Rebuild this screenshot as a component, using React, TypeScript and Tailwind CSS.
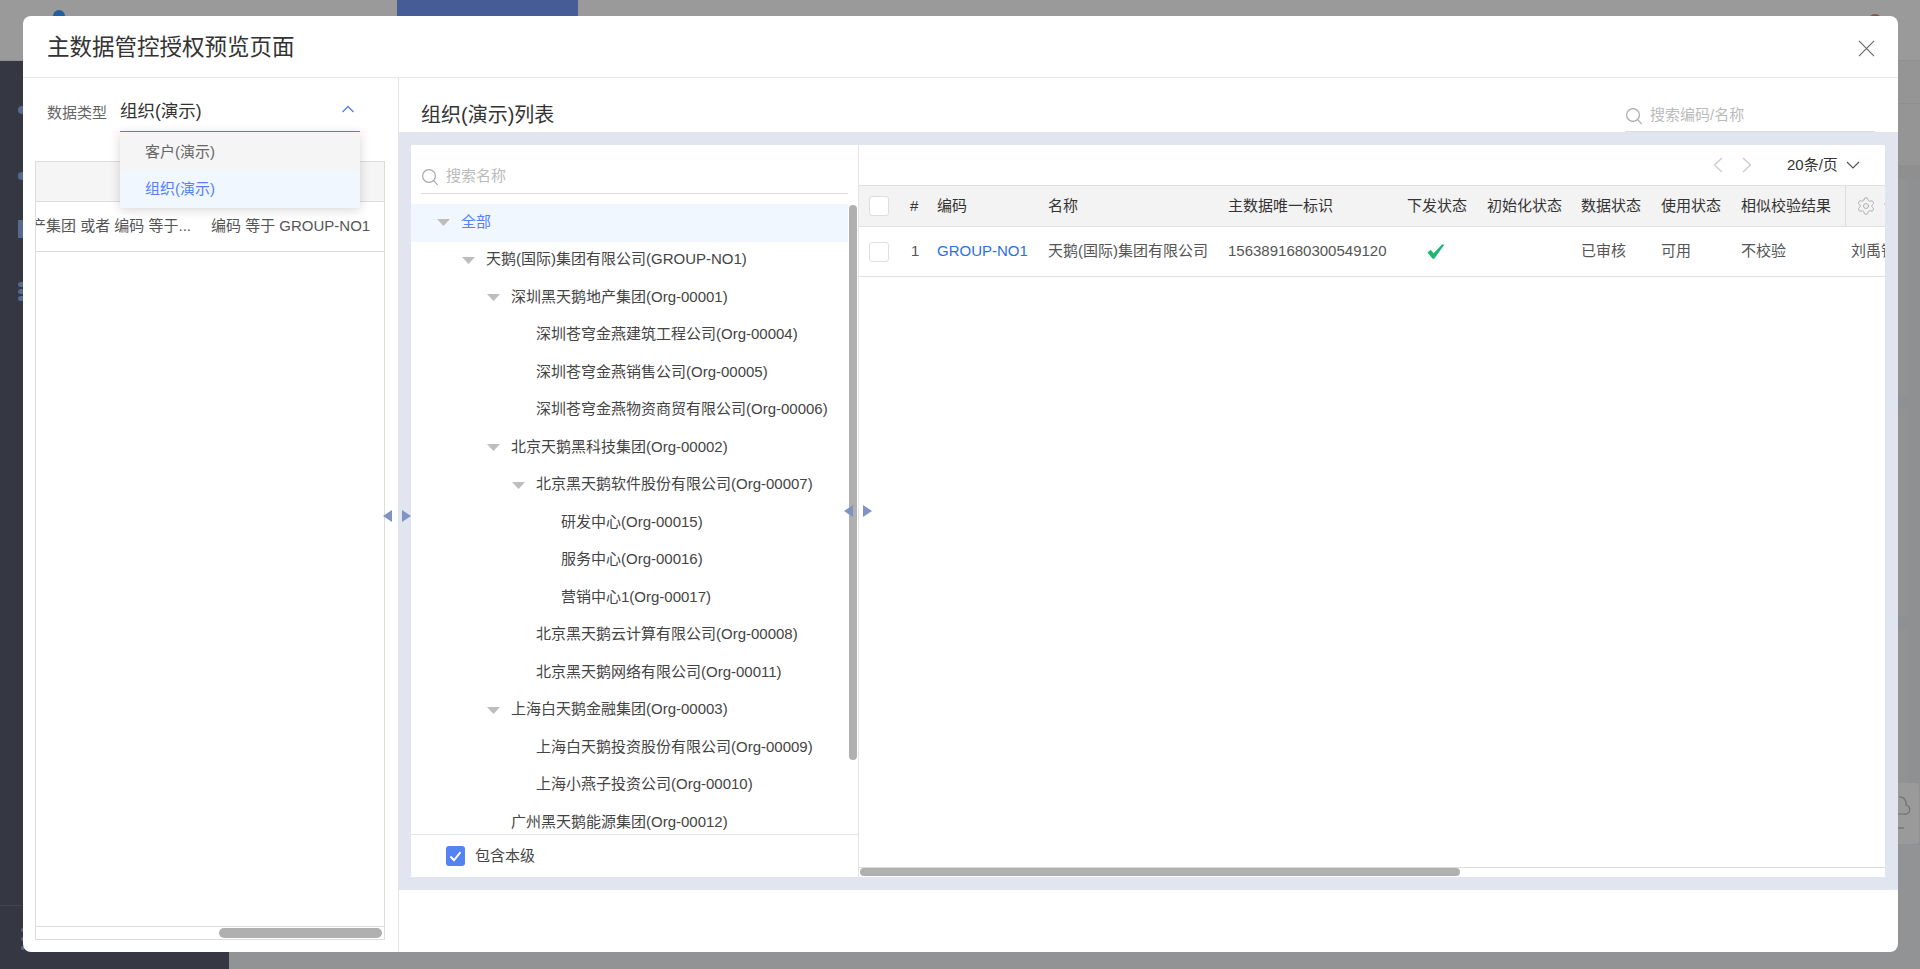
import React from "react";
import { Settings } from "lucide-react";

const font = "font-['Liberation_Sans','Noto_Sans_CJK_SC',sans-serif]";

const tree: { d: number; t: string; open?: boolean; active?: boolean }[] = [
  { d: 0, t: "全部", open: true, active: true },
  { d: 1, t: "天鹅(国际)集团有限公司(GROUP-NO1)", open: true },
  { d: 2, t: "深圳黑天鹅地产集团(Org-00001)", open: true },
  { d: 3, t: "深圳苍穹金燕建筑工程公司(Org-00004)" },
  { d: 3, t: "深圳苍穹金燕销售公司(Org-00005)" },
  { d: 3, t: "深圳苍穹金燕物资商贸有限公司(Org-00006)" },
  { d: 2, t: "北京天鹅黑科技集团(Org-00002)", open: true },
  { d: 3, t: "北京黑天鹅软件股份有限公司(Org-00007)", open: true },
  { d: 4, t: "研发中心(Org-00015)" },
  { d: 4, t: "服务中心(Org-00016)" },
  { d: 4, t: "营销中心1(Org-00017)" },
  { d: 3, t: "北京黑天鹅云计算有限公司(Org-00008)" },
  { d: 3, t: "北京黑天鹅网络有限公司(Org-00011)" },
  { d: 2, t: "上海白天鹅金融集团(Org-00003)", open: true },
  { d: 3, t: "上海白天鹅投资股份有限公司(Org-00009)" },
  { d: 3, t: "上海小燕子投资公司(Org-00010)" },
  { d: 2, t: "广州黑天鹅能源集团(Org-00012)" },
];

const SearchIcon = () => (
  <svg width="18" height="18" viewBox="0 0 18 18" fill="none" stroke="#a8a8a8" strokeWidth="1.2" className="shrink-0">
    <circle cx="8" cy="8" r="6.4" />
    <path d="M12.6 12.6 16.4 16.6" strokeLinecap="round" />
  </svg>
);

const Tri = ({ dir, color }: { dir: "down" | "left" | "right"; color: string }) => {
  if (dir === "down")
    return (
      <svg width="13" height="7" viewBox="0 0 13 7" className="shrink-0">
        <polygon points="0,0 13,0 6.5,7" fill={color} />
      </svg>
    );
  return (
    <svg width="9" height="12" viewBox="0 0 9 12" className="shrink-0">
      <polygon points={dir === "left" ? "9,0 9,12 0,6" : "0,0 0,12 9,6"} fill={color} />
    </svg>
  );
};

const Box = () => <div className="w-5 h-5 rounded-[3px] border border-[#dedede] bg-white" />;

const Cell = ({ w, children, cls = "" }: { w: string; children?: React.ReactNode; cls?: string }) => (
  <div className={`${w} shrink-0 pl-[11px] whitespace-nowrap flex items-center ${cls}`}>{children}</div>
);

export default function App() {
  return (
    <div className={`relative w-[1920px] h-[969px] overflow-hidden bg-[#929394] ${font}`}>
      {/* Dimmed page behind the dialog */}
      <div className="h-[61px] bg-[#9a9a9a] flex border-b border-[#8f8f8f]">
        <div className="w-3 h-3 rounded-full bg-[#235f9f] ml-[53px] mt-[10px]" />
        <div className="w-[181px] h-full bg-[#455c96] ml-[332px]" />
        <div className="w-[14px] h-[14px] rounded-full bg-[#7d5a45] ml-[1290px] mt-[14px]" />
      </div>
      <div className="flex h-[908px]">
        <div className="w-[229px] shrink-0 bg-[#353842] flex flex-col">
          <div className="h-[845px] pt-[45px] pl-[18px] flex flex-col border-b border-[#43464f]">
            <div className="w-2 h-2 rounded-sm bg-[#556a8e]" />
            <div className="w-2 h-2 rounded-sm bg-[#556a8e] mt-[58px]" />
            <div className="w-2 h-[18px] bg-[#556a8e] mt-[40px]" />
            <div className="w-2 h-[5px] rounded-sm bg-[#556a8e] mt-[44px]" />
            <div className="w-2 h-[5px] rounded-sm bg-[#556a8e] mt-[2px]" />
            <div className="w-2 h-[5px] rounded-sm bg-[#556a8e] mt-[2px]" />
          </div>
          <div className="pt-[22px] pl-[21px] flex flex-col gap-[5px]">
            <div className="w-1 h-1 rounded-sm bg-[#556a8e]" />
            <div className="w-1 h-1 rounded-sm bg-[#556a8e]" />
            <div className="w-1 h-1 rounded-sm bg-[#556a8e]" />
          </div>
        </div>
        <div className="flex-1 flex flex-col">
          <div className="h-[43px] shrink-0 bg-[#959595] border-b border-[#8e8e8e]" />
          <div className="h-[61px] shrink-0 bg-[#959595]" />
          <div className="h-[14px] shrink-0 bg-[#8f8f8f]" />
          <div className="pr-3 flex flex-col gap-[13px] bg-[#8f9091]">
            <div className="h-[217px] bg-[#929292]" />
            <div className="h-[207px] bg-[#929292]" />
            <div className="h-[216px] bg-[#929292]" />
          </div>
        </div>
      </div>
      <div className="absolute left-[1880px] top-[783px] w-[39px] h-[61px] bg-[#9a9a9a] rounded-[3px]">
        <svg width="39" height="61" viewBox="0 0 39 61" fill="none" stroke="#707070" strokeWidth="1.2">
          <path d="M18 31h6.500a4.500 4.500 0 0 0 1.500-9 6.500 6.500 0 0 0-7-8" />
          <path d="M18 45h6" />
        </svg>
      </div>

      {/* Dialog */}
      <div className="absolute left-[23px] top-4 w-[1875px] h-[936px] bg-white rounded-lg overflow-hidden flex flex-col text-[15px] text-[#333]">
        <div className="h-[62px] shrink-0 border-b border-[#e8e8e8] flex items-center justify-between pl-6 pr-[23px]">
          <div className="text-[22.5px] leading-[30px] text-[#333] mt-[2px]">主数据管控授权预览页面</div>
          <svg width="17" height="17" viewBox="0 0 18 18" stroke="#666" strokeWidth="1.2" className="mt-[3px]">
            <path d="M1 1 17 17M17 1 1 17" />
          </svg>
        </div>

        <div className="flex flex-1 min-h-0">
          {/* Left column */}
          <div className="w-[376px] shrink-0 border-r border-[#e4e4e4] flex flex-col pb-3 relative">
            <div className="h-[54px] pl-6 flex items-start shrink-0">
              <div className="mt-[25px] w-[73px] leading-5 text-[#666]">数据类型</div>
              <div className="w-[240px] h-[54px] border-b border-[#5582f3] flex items-start justify-between">
                <span className="mt-[21px] text-[17.5px] leading-6 text-[#333]">组织(演示)</span>
                <svg width="14" height="8" viewBox="0 0 14 8" fill="none" stroke="#5582f3" strokeWidth="1.4" className="mt-[27px] mr-[5px]">
                  <path d="M1.5 7 7 1.5 12.500 7" />
                </svg>
              </div>
            </div>
            {/* Open select menu */}
            <div className="absolute left-[97px] top-[54px] w-[240px] h-[76px] bg-white shadow-[0_2px_10px_rgba(0,0,0,0.16)] z-10 flex flex-col">
              <div className="h-[39px] bg-[#f5f5f5] pl-[25px] pt-[2px] flex items-center text-[#666]">客户(演示)</div>
              <div className="h-[37px] bg-[#f0f7ff] pl-[25px] flex items-center text-[#5582f3]">组织(演示)</div>
            </div>
            <div className="mt-[29px] ml-3 w-[350px] flex-1 min-h-0 border border-[#dcdcdc] flex flex-col">
              <div className="h-[40px] bg-[#f5f5f5] border-b border-[#dcdcdc] shrink-0" />
              <div className="h-[50px] border-b border-[#dcdcdc] shrink-0 flex items-center text-[#555] whitespace-nowrap overflow-hidden">
                <div className="w-[155px] shrink-0 flex justify-end overflow-hidden">
                  <span>房地产集团 或者 编码 等于...</span>
                </div>
                <div className="ml-[20px] shrink-0">编码 等于 GROUP-NO1</div>
              </div>
              <div className="flex-1" />
              <div className="h-[13px] shrink-0 border-t border-[#dcdcdc] flex items-center justify-end pr-[2px]">
                <div className="w-[163px] h-[10px] rounded-full bg-[#b0b0b0]" />
              </div>
            </div>
            <div className="absolute left-[360px] top-[432px] z-10 flex gap-[10px]">
              <Tri dir="left" color="#7f94c4" />
              <Tri dir="right" color="#7f94c4" />
            </div>
          </div>

          {/* Right column */}
          <div className="flex-1 min-w-0 flex flex-col">
            <div className="h-[54px] shrink-0 flex items-start justify-between pl-[22px] pr-[23px]">
              <div className="mt-[23px] text-[20px] leading-7 text-[#333]">组织(演示)列表</div>
              <div className="w-[250px] h-[54px] border-b border-[#dcdcdc] flex items-center gap-[7px] pt-[22px]">
                <SearchIcon />
                <span className="text-[#bbb]">搜索编码/名称</span>
              </div>
            </div>

            <div className="h-[758px] shrink-0 bg-[#e1e5ef] pt-[13px] pb-[13px] pl-3 pr-[13px]">
              <div className="h-full bg-white flex relative">
                {/* Tree */}
                <div className="w-[448px] shrink-0 border-r border-[#e4e4e4] flex flex-col">
                  <div className="h-[59px] shrink-0 px-[10px] pt-[11px]">
                    <div className="h-[38px] pt-1 border-b border-[#dcdcdc] flex items-center gap-[7px]">
                      <SearchIcon />
                      <span className="text-[#bbb]">搜索名称</span>
                    </div>
                  </div>
                  <div className="flex-1 min-h-0 flex overflow-hidden">
                    <div className="w-[437px] shrink-0">
                      {tree.map((n) => (
                        <div
                          key={n.t}
                          className={`h-[37.5px] flex items-center whitespace-nowrap ${n.active ? "bg-[#f0f7ff] text-[#5582f3]" : "text-[#444]"}`}
                          style={{ paddingLeft: 26 + n.d * 25 }}
                        >
                          <span className="w-6 shrink-0 flex items-center">
                            {n.open && <Tri dir="down" color="#bdbdbd" />}
                          </span>
                          <span className="mb-[2px]">{n.t}</span>
                        </div>
                      ))}
                    </div>
                    <div className="w-[10px] shrink-0 pl-px pt-px">
                      <div className="w-2 h-[555px] rounded-full bg-[#b0b0b0]" />
                    </div>
                  </div>
                  <div className="h-[43px] shrink-0 border-t border-[#e4e4e4] flex items-center pl-[35px] gap-[10px]">
                    <div className="w-[19px] h-5 rounded-[3px] bg-[#5582f3] flex items-center justify-center">
                      <svg width="13" height="11" viewBox="0 0 13 11" fill="none" stroke="#fff" strokeWidth="2">
                        <path d="M1.500 5.500 5 9.300 11.500 1.200" />
                      </svg>
                    </div>
                    <span className="text-[#444]">包含本级</span>
                  </div>
                </div>

                {/* Table */}
                <div className="flex-1 min-w-0 flex flex-col overflow-hidden">
                  <div className="h-[40px] shrink-0 flex items-center">
                    <svg width="10" height="16" viewBox="0 0 10 16" fill="none" stroke="#ccc" strokeWidth="1.3" className="ml-[854px]">
                      <path d="M9 1 1.500 8 9 15" />
                    </svg>
                    <svg width="10" height="16" viewBox="0 0 10 16" fill="none" stroke="#ccc" strokeWidth="1.3" className="ml-[19px]">
                      <path d="M1 1 8.500 8 1 15" />
                    </svg>
                    <span className="ml-[35px] whitespace-nowrap text-[#333]">20条/页</span>
                    <svg width="14" height="8" viewBox="0 0 14 8" fill="none" stroke="#555" strokeWidth="1.2" className="ml-2">
                      <path d="M1 1 7 7 13 1" />
                    </svg>
                  </div>
                  <div className="h-[42px] shrink-0 bg-[#f3f3f3] border-y border-[#e0e0e0] flex text-[#333]">
                    <div className="w-[40px] shrink-0 flex items-center pl-[10px]"><Box /></div>
                    <Cell w="w-[27px]">#</Cell>
                    <Cell w="w-[111px]" cls="pl-[10px]">编码</Cell>
                    <Cell w="w-[180px]" cls="pl-[10px]">名称</Cell>
                    <Cell w="w-[179px]">主数据唯一标识</Cell>
                    <Cell w="w-[80px]">下发状态</Cell>
                    <Cell w="w-[94px]">初始化状态</Cell>
                    <Cell w="w-[80px]">数据状态</Cell>
                    <Cell w="w-[80px]">使用状态</Cell>
                    <Cell w="w-[115px]">相似校验结果</Cell>
                    <div className="flex-1 border-l border-[#dcdcdc] pl-[10px] flex items-center whitespace-nowrap gap-[8px]">
                      <Settings size={20} strokeWidth={1.1} color="#aaa" className="shrink-0" />
                      <span>创建人</span>
                    </div>
                  </div>
                  <div className="h-[50px] shrink-0 border-b border-[#e0e0e0] flex text-[#555]">
                    <div className="w-[40px] shrink-0 flex items-center pl-[10px]"><Box /></div>
                    <Cell w="w-[27px]" cls="pl-[12px]">1</Cell>
                    <Cell w="w-[111px]" cls="pl-[10px] text-[#2b70e0]">GROUP-NO1</Cell>
                    <Cell w="w-[180px]" cls="pl-[10px]">天鹅(国际)集团有限公司</Cell>
                    <Cell w="w-[179px]">1563891680300549120</Cell>
                    <div className="w-[80px] shrink-0 flex items-center justify-center pb-[1px]">
                      <svg width="18" height="15" viewBox="0 0 18 15">
                        <polygon points="0.5,8.500 3.500,5.800 6.700,9.200 15,0.500 17.500,0.500 7.200,14.800 5.500,14.800" fill="#21b573" />
                      </svg>
                    </div>
                    <Cell w="w-[94px]" />
                    <Cell w="w-[80px]">已审核</Cell>
                    <Cell w="w-[80px]">可用</Cell>
                    <Cell w="w-[110px]">不校验</Cell>
                    <Cell w="w-[120px]" cls="pl-[10px]">刘禹锡</Cell>
                  </div>
                  <div className="flex-1" />
                  <div className="h-[10px] shrink-0 border-t border-[#dcdcdc] pl-px">
                    <div className="w-[600px] h-2 rounded-full bg-[#b0b0b0]" />
                  </div>
                </div>

                <div className="absolute left-[433px] top-[360px] z-10 flex gap-[10px]">
                  <Tri dir="left" color="#7f94c4" />
                  <Tri dir="right" color="#7f94c4" />
                </div>
              </div>
            </div>
            <div className="flex-1" />
          </div>
        </div>
      </div>
    </div>
  );
}
